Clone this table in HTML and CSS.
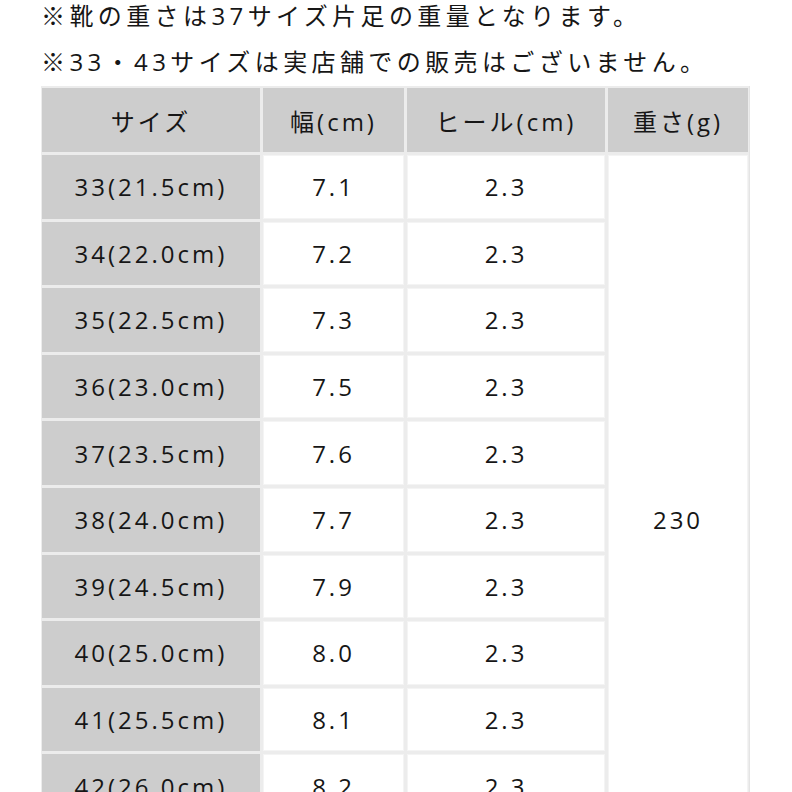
FILE: index.html
```html
<!DOCTYPE html>
<html lang="ja">
<head>
<meta charset="utf-8">
<link rel="stylesheet" href="styles.css">
</head>
<body>
<div class="page">
  <p class="note">※靴の重さは37サイズ片足の重量となります。</p>
  <p class="note second">※33・43サイズは実店舗での販売はございません。</p>
  <div class="table">
    <div class="cell head">サイズ</div>
    <div class="cell head">幅(cm)</div>
    <div class="cell head">ヒール(cm)</div>
    <div class="cell head">重さ(g)</div>

    <div class="cell side">33(21.5cm)</div><div class="cell">7.1</div><div class="cell">2.3</div>
    <div class="cell weight">230</div>
    <div class="cell side">34(22.0cm)</div><div class="cell">7.2</div><div class="cell">2.3</div>
    <div class="cell side">35(22.5cm)</div><div class="cell">7.3</div><div class="cell">2.3</div>
    <div class="cell side">36(23.0cm)</div><div class="cell">7.5</div><div class="cell">2.3</div>
    <div class="cell side">37(23.5cm)</div><div class="cell">7.6</div><div class="cell">2.3</div>
    <div class="cell side">38(24.0cm)</div><div class="cell">7.7</div><div class="cell">2.3</div>
    <div class="cell side">39(24.5cm)</div><div class="cell">7.9</div><div class="cell">2.3</div>
    <div class="cell side">40(25.0cm)</div><div class="cell">8.0</div><div class="cell">2.3</div>
    <div class="cell side">41(25.5cm)</div><div class="cell">8.1</div><div class="cell">2.3</div>
    <div class="cell side">42(26.0cm)</div><div class="cell">8.2</div><div class="cell">2.3</div>
    <div class="cell side">43(26.5cm)</div><div class="cell">8.3</div><div class="cell">2.3</div>
  </div>
</div>
</body>
</html>
```
FILE: styles.css
```css
html, body {
  margin: 0;
  padding: 0;
  background: #ffffff;
}
body {
  font-family: "Open Sans", "Noto Sans CJK JP", sans-serif;
  color: #161616;
  overflow: hidden;
}
.page {
  padding-left: 41px;
  width: 751px;
}
.note {
  margin: 0;
  height: 32px;
  line-height: 32px;
  font-size: 24px;
  letter-spacing: 4.4px;
  white-space: nowrap;
}
.note.second {
  margin-top: 14px;
}
.table {
  margin-top: 8px;
  display: grid;
  grid-template-columns: 218px 141px 198px 140px;
  grid-template-rows: 64px repeat(11, 63.6px);
  gap: 3px;
  padding: 2px 1px;
  width: 706px;
  background: #ececec;
  border-right: 1px solid #e4e4e4;
}
.cell {
  display: flex;
  align-items: center;
  justify-content: center;
  background: #ffffff;
  font-size: 24px;
  letter-spacing: 3px;
  white-space: nowrap;
  box-shadow: inset 0 0 0 1px #f4f4f4;
}
.cell.head,
.cell.side {
  background: #cdcdcd;
  box-shadow: none;
}
.cell.weight {
  grid-column: 4;
  grid-row: 2 / span 11;
}
```
